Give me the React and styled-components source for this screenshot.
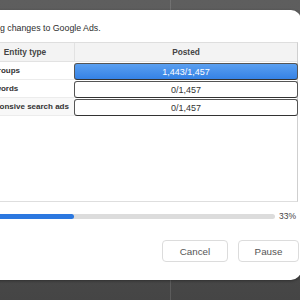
import React from "react";
import styled, { createGlobalStyle } from "styled-components";

const Global = createGlobalStyle`
  html, body { margin: 0; padding: 0; }
  body {
    width: 300px; height: 300px; overflow: hidden;
    font-family: "Liberation Sans", Arial, sans-serif;
  }
`;

const Screen = styled.div`
  width: 300px;
  height: 300px;
  overflow: hidden;
  display: flex;
  flex-direction: column;
  background:
    linear-gradient(to right, transparent 170px, rgba(255,255,255,0.12) 170px, rgba(255,255,255,0.12) 171px, transparent 171px),
    linear-gradient(#5e5e5e, #5a5a5a 30%, #454545);
`;

const TopStrip = styled.div`
  height: 10px;
  flex: none;
`;

const Dialog = styled.div`
  flex: none;
  height: 270px;
  box-sizing: border-box;
  margin-left: -45px;
  width: 346px;
  background: #fff;
  border-radius: 0 10px 10px 0;
  box-shadow: 0 1px 3px rgba(0,0,0,0.35);
  padding: 12px 3px 18px 20px;
  display: flex;
  flex-direction: column;
`;

const Title = styled.div`
  font-size: 8.8px;
  line-height: 12px;
  color: #2e2e2e;
  margin-left: 0.5px;
`;

const Table = styled.div`
  margin-top: 8px;
  height: 160px;
  box-sizing: border-box;
  border: 1px solid #dedede;
  border-right-color: #cfcfcf;
  display: grid;
  grid-template-columns: 98px 1fr;
  grid-auto-rows: 18px;
  grid-template-rows: 19px;
  align-content: start;
`;

const HeadCell = styled.div`
  background: #f3f3f3;
  border-bottom: 1px solid #e2e2e2;
  border-left: ${(p) => (p.$divider ? "1px solid #e2e2e2" : "none")};
  font-size: 8.3px;
  font-weight: bold;
  color: #444;
  display: flex;
  align-items: center;
  justify-content: center;
`;

const NameCell = styled.div`
  font-size: 8px;
  font-weight: bold;
  color: #333;
  white-space: nowrap;
  display: flex;
  align-items: center;
  padding-left: 4px;
  border-bottom: 1px solid #ececec;
  background: ${(p) => (p.$shade ? "#f8f8f8" : "#fff")};
`;

const ValueCell = styled.div`
  padding: 1px 0 0 0;
  display: flex;
`;

const ValueBox = styled.div`
  flex: 1;
  box-sizing: border-box;
  border: 1px solid #555;
  border-bottom-color: #333;
  border-radius: 3px;
  font-size: 9px;
  color: ${(p) => (p.$active ? "#fff" : "#333")};
  background: ${(p) => (p.$active ? "linear-gradient(#5a9ff0, #3582e6)" : "#fff")};
  display: flex;
  align-items: center;
  justify-content: center;
  margin-right: -1px;
`;

const ProgressRow = styled.div`
  margin-top: 10px;
  display: flex;
  align-items: center;
  gap: 4px;
  height: 8px;
`;

const Track = styled.div`
  flex: 1;
  height: 5px;
  border-radius: 3px;
  background: #dcdcdc;
  overflow: hidden;
`;

const Fill = styled.div`
  height: 100%;
  background: #2c78e0;
  border-radius: 3px;
`;

const Percent = styled.div`
  font-size: 8.5px;
  color: #444;
  width: 19px;
`;

const Buttons = styled.div`
  margin-top: auto;
  display: flex;
  justify-content: flex-end;
  gap: 10px;
  margin-right: -1px;
`;

const Button = styled.button`
  width: ${(p) => p.$w}px;
  height: 22px;
  box-sizing: border-box;
  background: #fff;
  border: 1px solid #dcdcdc;
  border-radius: 4px;
  font-family: inherit;
  font-size: 9.8px;
  color: #555;
  padding: 0;
`;

const rows = [
  { name: "Ad groups", value: "1,443/1,457", active: true },
  { name: "Keywords", value: "0/1,457" },
  { name: "Responsive search ads", value: "0/1,457", shade: true },
];

export default function App() {
  const pct = 33;
  return (
    <>
      <Global />
      <Screen>
        <TopStrip />
        <Dialog>
          <Title>Posting changes to Google Ads.</Title>
          <Table>
            <HeadCell>Entity type</HeadCell>
            <HeadCell $divider>Posted</HeadCell>
            {rows.map((r) => (
              <React.Fragment key={r.name}>
                <NameCell $shade={r.shade}>{r.name}</NameCell>
                <ValueCell>
                  <ValueBox $active={r.active}>{r.value}</ValueBox>
                </ValueCell>
              </React.Fragment>
            ))}
          </Table>
          <ProgressRow>
            <Track>
              <Fill style={{ width: `${pct}%` }} />
            </Track>
            <Percent>{pct}%</Percent>
          </ProgressRow>
          <Buttons>
            <Button $w={66}>Cancel</Button>
            <Button $w={61}>Pause</Button>
          </Buttons>
        </Dialog>
      </Screen>
    </>
  );
}
